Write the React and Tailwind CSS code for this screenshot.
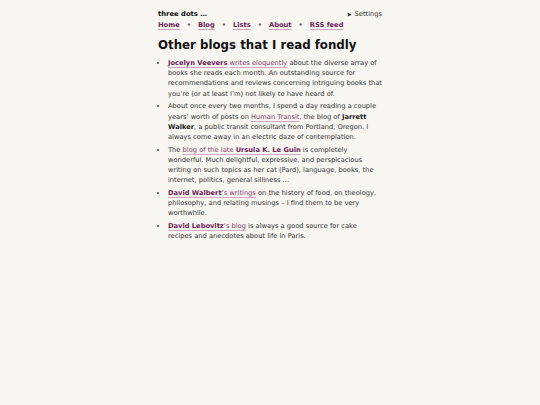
const link = 'text-[#84406f] underline decoration-[#cfa9c2] underline-offset-[1.5px]';
const strongLink = 'font-bold text-[#6b2458] underline decoration-[#c9a3bd] underline-offset-[1.5px]';

const Dot = () => <span className="text-[#666]">•</span>;

export default function App() {
  return (
    <div className="min-h-[405px] w-full bg-[#f7f6f1] font-['DejaVu_Sans',sans-serif] text-[#222]">
      <div className="mx-auto w-[224px] pt-[9px]">
        <header className="flex items-start justify-between">
          <div className="shrink-0">
            <p className="text-[6.8px] font-bold leading-[10px] text-[#111]">three dots …</p>
            <nav className="mt-[1px] flex gap-[7px] whitespace-nowrap text-[6.7px] font-bold leading-[10px]">
              <a className={strongLink}>Home</a>
              <Dot />
              <a className={strongLink}>Blog</a>
              <Dot />
              <a className={strongLink}>Lists</a>
              <Dot />
              <a className={strongLink}>About</a>
              <Dot />
              <a className={strongLink}>RSS feed</a>
            </nav>
          </div>
          <p className="flex items-center gap-[3px] whitespace-nowrap text-[6.7px] leading-[10px] text-[#333]">
            <span className="text-[5px]">▶</span>
            <span>Settings</span>
          </p>
        </header>

        <h1 className="mt-[7px] text-[11.8px] font-bold leading-[16px] text-[#111]">
          Other blogs that I read fondly
        </h1>

        <ul className="mt-[5px] flex flex-col gap-[2.5px] pl-[10px] text-[6.7px] leading-[10.2px] text-[#333]">
          <li className="list-disc marker:text-[#444]">
            <a className={strongLink}>Jocelyn Veevers</a> <a className={link}>writes eloquently</a> about the diverse array of books she reads each month. An outstanding source for recommendations and reviews concerning intriguing books that you’re (or at least I’m) not likely to have heard of.
          </li>
          <li className="list-disc marker:text-[#444]">
            About once every two months, I spend a day reading a couple years’ worth of posts on <a className={link}>Human Transit</a>, the blog of <strong className="font-bold text-[#222]">Jarrett Walker</strong>, a public transit consultant from Portland, Oregon. I always come away in an electric daze of contemplation.
          </li>
          <li className="list-disc marker:text-[#444]">
            The <a className={link}>blog of the late <span className="font-bold text-[#6b2458]">Ursula K. Le Guin</span></a> is completely wonderful. Much delightful, expressive, and perspicacious writing on such topics as her cat (Pard), language, books, the internet, politics, general silliness …
          </li>
          <li className="list-disc marker:text-[#444]">
            <a className={link}><span className="font-bold text-[#6b2458]">David Walbert</span>’s writings</a> on the history of food, on theology, philosophy, and relating musings – I find them to be very worthwhile.
          </li>
          <li className="list-disc marker:text-[#444]">
            <a className={link}><span className="font-bold text-[#6b2458]">David Lebovitz</span>’s blog</a> is always a good source for cake recipes and anecdotes about life in Paris.
          </li>
        </ul>
      </div>
    </div>
  );
}
